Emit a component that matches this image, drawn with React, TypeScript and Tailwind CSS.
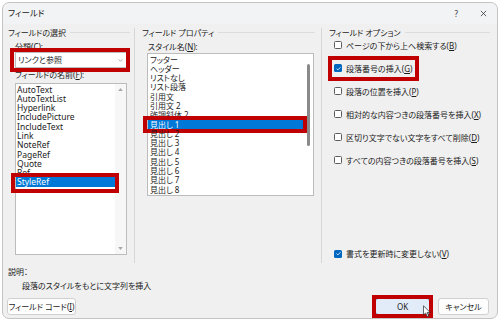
import React from 'react';

const leftItems = ['AutoText', 'AutoTextList', 'Hyperlink', 'IncludePicture', 'IncludeText', 'Link', 'NoteRef', 'PageRef', 'Quote', 'Ref', 'StyleRef'];
const styleItems = ['フッター', 'ヘッダー', 'リストなし', 'リスト段落', '引用文', '引用文 2', '強調斜体 2', '見出し 1', '見出し 2', '見出し 3', '見出し 4', '見出し 5', '見出し 6', '見出し 7', '見出し 8'];

const options = [
  { text: 'ページの下から上へ検索する', key: 'B', checked: false, marked: false },
  { text: '段落番号の挿入', key: 'G', checked: true, marked: true },
  { text: '段落の位置を挿入', key: 'P', checked: false, marked: false },
  { text: '相対的な内容つきの段落番号を挿入', key: 'X', checked: false, marked: false },
  { text: '区切り文字でない文字をすべて削除', key: 'D', checked: false, marked: false },
  { text: 'すべての内容つきの段落番号を挿入', key: 'S', checked: false, marked: false },
];

// red annotation frame drawn over a control
function RedMark({ className }: { className: string }) {
  return <div className={`pointer-events-none absolute border-[4px] border-[#c00000] ${className}`} />;
}

function GroupHeading({ label, className }: { label: string; className: string }) {
  return (
    <div className={`mt-[3px] flex h-[11px] items-center gap-[4px] leading-[11px] ${className}`}>
      <span className="whitespace-nowrap">{label}</span>
      <span className="h-px flex-1 bg-[#dddddd]" />
    </div>
  );
}

function CheckBox({ text, keyChar, checked }: { text: string; keyChar: string; checked: boolean }) {
  return (
    <div className="flex h-[11px] items-center gap-[4px] whitespace-nowrap leading-[11px]">
      {checked ? (
        <span className="flex h-[8px] w-[8px] items-center justify-center rounded-[1.5px] bg-[#0067c0]">
          <svg viewBox="0 0 8 8" className="h-[7px] w-[7px]">
            <path d="M1.8 4.1 L3.3 5.6 L6.3 2.5" stroke="white" strokeWidth="0.9" fill="none" />
          </svg>
        </span>
      ) : (
        <span className="h-[8px] w-[8px] rounded-[1.5px] border border-[#5c5c5c] bg-white" />
      )}
      <span>
        {text}(<span className="underline">{keyChar}</span>)
      </span>
    </div>
  );
}

export default function App() {
  return (
    <div className="h-[321px] w-[500px] bg-white p-[2px] font-['Noto_Sans','Noto_Sans_CJK_JP',sans-serif] text-[8px] text-[#1b1b1b] [font-feature-settings:'palt']">
      <div className="flex h-[317px] w-[496px] flex-col rounded-[7px] border border-[#c4c4c4] bg-[#f0f0f0]">
        {/* title bar */}
        <div className="flex h-[21px] items-center justify-between rounded-t-[7px] bg-[#f2f3f5] pl-[5px] pr-[10px]">
          <span className="text-[8.5px]">フィールド</span>
          <div className="flex items-center gap-[22px]">
            <span className="text-[8px] text-[#333]">?</span>
            <svg viewBox="0 0 8 8" className="h-[7px] w-[7px]">
              <path d="M1 1 L7 7 M7 1 L1 7" stroke="#333" strokeWidth="0.9" />
            </svg>
          </div>
        </div>

        {/* three groups */}
        <div className="flex h-[239px]">
          {/* フィールドの選択 */}
          <div className="flex w-[131px] flex-col">
            <GroupHeading label="フィールドの選択" className="pl-[5px] pr-[4px]" />
            <div className="ml-[12px] mt-[4px] h-[10px] leading-[10px]">
              分類(<span className="underline">C</span>):
            </div>
            <div className="relative ml-[12px] flex h-[16px] w-[112px] items-center justify-between border border-[#bdbdbd] bg-white pl-[2px] pr-[3px]">
              <span>リンクと参照</span>
              <svg viewBox="0 0 6 4" className="h-[3px] w-[5px]">
                <path d="M0.5 0.5 L3 3 L5.5 0.5" stroke="#777" strokeWidth="0.8" fill="none" />
              </svg>
              <RedMark className="-bottom-[5px] -left-[6px] -right-[4px] -top-[5px]" />
            </div>
            <div className="ml-[12px] mt-[2px] h-[10px] leading-[10px]">
              フィールドの名前(<span className="underline">F</span>):
            </div>
            <div className="ml-[12px] mt-[3px] flex h-[172px] w-[112px] border border-[#bcbcbc] bg-white">
              <div className="flex flex-1 flex-col pt-[0.5px] text-[8.5px]">
                {leftItems.map((item) => (
                  <div
                    key={item}
                    className={
                      item === 'StyleRef'
                        ? 'relative h-[9.3px] bg-[#0078d7] pl-[1px] leading-[9.3px] text-white'
                        : 'relative h-[9.3px] pl-[1px] leading-[9.3px]'
                    }
                  >
                    {item}
                    {item === 'StyleRef' && <RedMark className="-bottom-[6px] -left-[5px] -right-[4px] -top-[4px]" />}
                  </div>
                ))}
              </div>
              <div className="flex w-[11px] flex-col items-center justify-between bg-[#f7f7f7] py-[4px]">
                <svg viewBox="0 0 6 4" className="h-[3px] w-[5px]">
                  <path d="M0 4 L3 0 L6 4 Z" fill="#a6a6a6" />
                </svg>
                <svg viewBox="0 0 6 4" className="h-[3px] w-[5px]">
                  <path d="M0 0 L6 0 L3 4 Z" fill="#a6a6a6" />
                </svg>
              </div>
            </div>
          </div>

          <div className="mt-[4px] w-px bg-[#d6d6d6]" />

          {/* フィールド プロパティ */}
          <div className="flex w-[186px] flex-col">
            <GroupHeading label="フィールド プロパティ" className="pl-[7px] pr-[6px]" />
            <div className="ml-[13px] mt-[4px] h-[10px] leading-[10px]">
              スタイル名(<span className="underline">N</span>):
            </div>
            <div className="ml-[12px] mt-[1px] flex h-[143px] w-[167px] border border-[#bcbcbc] bg-white">
              <div className="flex flex-1 flex-col pt-[0.5px]">
                {styleItems.map((item) => (
                  <div
                    key={item}
                    className={
                      item === '見出し 1'
                        ? 'relative h-[9.3px] bg-[#0078d7] pl-[2px] leading-[9.3px] text-white'
                        : 'relative h-[9.3px] pl-[2px] leading-[9.3px]'
                    }
                  >
                    {item}
                    {item === '見出し 1' && <RedMark className="-bottom-[4px] -left-[5px] -right-[4px] -top-[4px]" />}
                  </div>
                ))}
              </div>
              <div className="flex w-[10px] justify-center pt-[10px]">
                <div className="h-[82px] w-[3px] rounded-full bg-[#8a8a8a]" />
              </div>
            </div>
          </div>

          <div className="mt-[4px] w-px bg-[#d6d6d6]" />

          {/* フィールド オプション */}
          <div className="flex flex-1 flex-col">
            <GroupHeading label="フィールド オプション" className="pl-[7px] pr-[7px]" />
            <div className="ml-[12px] mt-[1.5px] flex flex-col gap-[12px]">
              {options.map((o) => (
                <div key={o.key} className="relative self-start">
                  <CheckBox text={o.text} keyChar={o.key} checked={o.checked} />
                  {o.marked && <RedMark className="-bottom-[7px] -left-[6px] -right-[7px] -top-[7px]" />}
                </div>
              ))}
            </div>
            <div className="mb-[4px] ml-[12px] mt-auto">
              <CheckBox text="書式を更新時に変更しない" keyChar="V" checked />
            </div>
          </div>
        </div>

        {/* description */}
        <div className="mt-[2.5px] h-[11px] pl-[5px] leading-[11px]">説明：</div>
        <div className="mt-[3px] h-[11px] pl-[19px] leading-[11px]">段落のスタイルをもとに文字列を挿入</div>

        {/* buttons */}
        <div className="mt-[7.5px] flex items-center pl-[4px] pr-[8px]">
          <button className="flex h-[17px] w-[69px] items-center justify-center rounded-[3px] border border-[#d0d0d0] bg-[#fdfdfd]">
            フィールド コード(<span className="underline">I</span>)
          </button>
          <div className="flex-1" />
          <button className="relative flex h-[17px] w-[55px] items-center justify-center rounded-[3px] border border-[#5b8fd0] bg-[#e1ecf8]">
            OK
            <RedMark className="-bottom-[4px] -left-[4px] -right-[4px] -top-[4px]" />
            <svg viewBox="0 0 9 14" className="absolute left-[47px] top-[6px] h-[13px] w-[8px]">
              <path d="M0.5 0.5 L0.5 11 L3 8.7 L4.8 12.8 L6.4 12.1 L4.7 8.1 L8 8.1 Z" fill="white" stroke="#222" strokeWidth="0.8" strokeLinejoin="round" />
            </svg>
          </button>
          <button className="ml-[8px] flex h-[17px] w-[51px] items-center justify-center rounded-[3px] border border-[#d0d0d0] bg-[#fdfdfd]">
            キャンセル
          </button>
        </div>
      </div>
    </div>
  );
}
